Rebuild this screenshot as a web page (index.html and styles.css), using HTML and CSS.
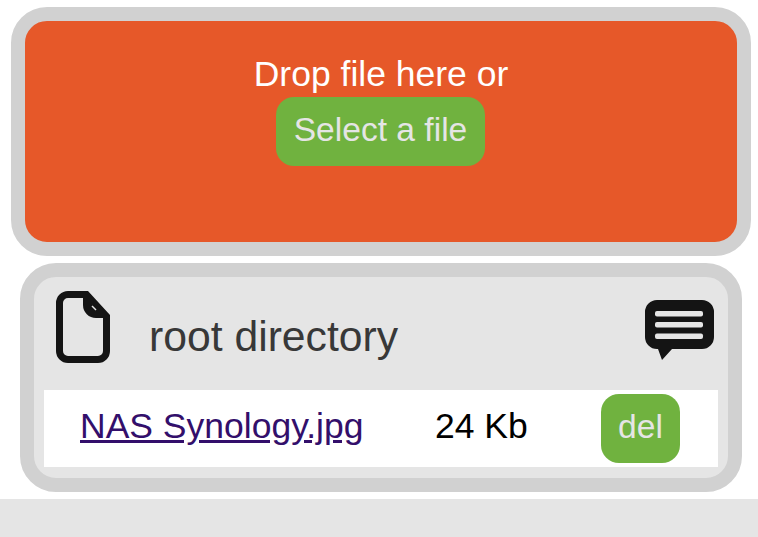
FILE: index.html
```html
<!DOCTYPE html>
<html lang="en">
<head>
    <meta charset="UTF-8">
    <meta name="viewport" content="width=device-width, initial-scale=1.0">
    <title>File Manager</title>
    <link rel="stylesheet" href="styles.css">
</head>
<body>
    <div class="dropzone">
        <p class="drop-text">Drop file here or</p>
        <button class="btn btn-select">Select a file</button>
    </div>

    <div class="browser">
        <div class="browser-head">
            <svg class="icon-file" width="54" height="72" viewBox="0 0 54 72">
                <path fill-rule="evenodd" fill="#141414" d="M12 0H32L54 24V60A12 12 0 0 1 42 72H12A12 12 0 0 1 0 60V12A12 12 0 0 1 12 0ZM12 7H27V14A13 13 0 0 0 40 27H47V60A5 5 0 0 1 42 65H12A5 5 0 0 1 7 60V12A5 5 0 0 1 12 7Z"/>
                <path d="M36 15L40 19" stroke="#e5e5e5" stroke-width="1.5"/>
            </svg>
            <h2 class="dir-name">root directory</h2>
            <svg class="icon-msg" width="69" height="60" viewBox="0 0 69 60">
                <path d="M12 0H57A12 12 0 0 1 69 12V37A12 12 0 0 1 57 49H27L17 60L13 49H12A12 12 0 0 1 0 37V12A12 12 0 0 1 12 0Z" fill="#141414"/>
                <rect x="10" y="11" width="48" height="5.5" rx="2" fill="#e5e5e5"/>
                <rect x="10" y="22" width="48" height="5.5" rx="2" fill="#e5e5e5"/>
                <rect x="10" y="33.5" width="48" height="5.5" rx="2" fill="#e5e5e5"/>
            </svg>
        </div>
        <div class="file-row">
            <a class="file-name" href="#">NAS Synology.jpg</a>
            <span class="file-size">24 Kb</span>
            <button class="btn btn-del">del</button>
        </div>
    </div>

    <footer class="footer"></footer>
</body>
</html>
```

FILE: styles.css
```css
html, body {
    margin: 0;
    padding: 0;
}

body {
    font-family: "Liberation Sans", Arial, Helvetica, sans-serif;
    background: white;
    height: 537px;
    overflow: hidden;
    padding-top: 7px;
    box-sizing: border-box;
}

.dropzone {
    box-sizing: border-box;
    width: 740px;
    height: 249px;
    margin-left: 11px;
    padding-top: 30px;
    background: #e65829;
    border: 14px solid #d1d1d1;
    border-radius: 36px;
    text-align: center;
    color: white;
}

.drop-text {
    margin: 0 0 -1px;
    font-size: 35.5px;
    line-height: 47px;
}

.btn {
    border: none;
    background: #70b23f;
    color: #e5e5e5;
    font-family: inherit;
    font-size: 33.6px;
    border-radius: 18px;
    padding: 0 0 4px;
    cursor: pointer;
}

.btn-select {
    display: block;
    margin: 0 0 0 251px;
    width: 209px;
    height: 69px;
}

.browser {
    box-sizing: border-box;
    width: 722px;
    height: 229px;
    margin: 7px 0 7px 20px;
    padding: 0 10px;
    background: #e5e5e5;
    border: 14px solid #d1d1d1;
    border-radius: 36px;
}

.browser-head {
    display: flex;
    align-items: center;
    box-sizing: border-box;
    height: 113px;
    padding-bottom: 14px;
}

.icon-file {
    margin-left: 12px;
}

.dir-name {
    margin: 20px 0 0 39px;
    flex: 1;
    font-size: 42.7px;
    font-weight: normal;
    color: #383838;
}

.icon-msg {
    margin-right: 4px;
    margin-top: 6px;
}

.file-row {
    display: flex;
    align-items: center;
    height: 77px;
    background: white;
}

.file-name {
    margin: -4px 0 0 36px;
    width: 355px;
    font-size: 35.5px;
    color: #330f6b;
}

.file-size {
    margin-top: -4px;
    width: 166px;
    font-size: 35.5px;
    color: black;
}

.btn-del {
    width: 79px;
    height: 69px;
}

.footer {
    height: 38px;
    background: #e5e5e5;
}
```
